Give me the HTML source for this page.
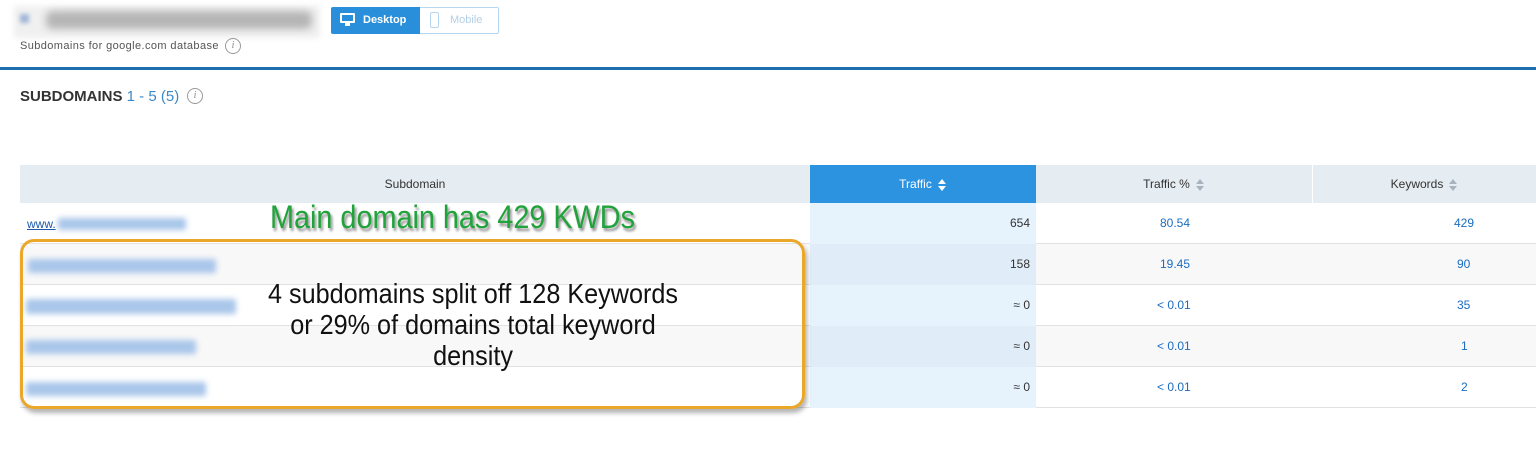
<!DOCTYPE html>
<html><head><meta charset="utf-8"><style>
*{margin:0;padding:0;box-sizing:border-box}
body{width:1536px;height:476px;background:#fff;font-family:"Liberation Sans",sans-serif;position:relative;overflow:hidden}
.a{position:absolute}
.blur{position:absolute;background:#a9c6ea;filter:blur(3px);border-radius:2px}
.row{position:absolute;left:20px;width:1516px;height:41px;border-bottom:1px solid #e2e2e2}
.num{position:absolute;font-size:12px;line-height:41px}
.hd{position:absolute;top:165px;height:38px;line-height:38px;font-size:12px;color:#333;text-align:center;background:#e5ecf2}
.arr{display:inline-block;vertical-align:middle;margin-left:6px;width:9px;height:12px;position:relative}
.arr:before{content:"";position:absolute;left:0;top:0;border:4.5px solid transparent;border-bottom:5px solid #a9b3bd;border-top:0}
.arr:after{content:"";position:absolute;left:0;bottom:0;border:4.5px solid transparent;border-top:5px solid #a9b3bd;border-bottom:0}
.w .arr:before{border-bottom-color:#fff}
.w .arr:after{border-top-color:#fff}
</style></head><body>
<div class="a" style="left:14px;top:6px;width:306px;height:32px;background:#f0f0f0;filter:blur(3px)"></div>
<div class="a" style="left:46px;top:11px;width:266px;height:18px;background:#b5b5b5;filter:blur(4px);border-radius:6px"></div>
<div class="a" style="left:20px;top:14px;width:9px;height:9px;background:#9fb6d8;filter:blur(2px)"></div>
<div class="a" style="left:20px;top:40px;font-size:11px;color:#555;letter-spacing:.4px">Subdomains for google.com database</div>
<div class="a" style="left:225px;top:38px;width:16px;height:16px;border:1px solid #999;border-radius:50%;font-size:10px;color:#888;text-align:center;line-height:14px;font-style:italic;font-family:'Liberation Serif',serif">i</div>
<div class="a" style="left:331px;top:7px;width:89px;height:27px;background:#2a8fdb;border-radius:2px 0 0 2px;color:#fff;font-size:11px;font-weight:bold;line-height:27px;padding-left:32px">Desktop</div>
<div class="a" style="left:340px;top:13px;width:15px;height:10px;border:2px solid #fff;border-radius:1px"></div>
<div class="a" style="left:345px;top:23px;width:5px;height:3px;background:#fff"></div>
<div class="a" style="left:420px;top:7px;width:79px;height:27px;border:1px solid #b7d6ef;border-left:0;border-radius:0 2px 2px 0;color:#b2cfe6;font-size:11px;line-height:25px;padding-left:30px">Mobile</div>
<div class="a" style="left:430px;top:12px;width:9px;height:16px;border:1.5px solid #b7d6ef;border-radius:2px"></div>
<div class="a" style="left:0;top:67px;width:1536px;height:3px;background:#1e6fae"></div>
<div class="a" style="left:20px;top:88px;font-size:15px;font-weight:bold;color:#333">SUBDOMAINS <span style="font-weight:normal;color:#3b89c9">1 - 5 (5)</span></div>
<div class="a" style="left:187px;top:88px;width:16px;height:16px;border:1px solid #999;border-radius:50%;font-size:10px;color:#888;text-align:center;line-height:14px;font-style:italic;font-family:'Liberation Serif',serif">i</div>

<div class="hd" style="left:20px;width:790px">Subdomain</div>
<div class="hd w" style="left:810px;width:226px;background:#2c93e0;color:#fff">Traffic<span class="arr"></span></div>
<div class="hd" style="left:1036px;width:277px;border-right:1px solid #fff">Traffic %<span class="arr"></span></div>
<div class="hd" style="left:1313px;width:223px">Keywords<span class="arr"></span></div>

<div class="row" style="top:203px;background:#fff"></div>
<div class="row" style="top:244px;background:#f8f8f8"></div>
<div class="row" style="top:285px;background:#fff"></div>
<div class="row" style="top:326px;background:#f8f8f8"></div>
<div class="row" style="top:367px;background:#fff"></div>
<div class="a" style="left:810px;top:203px;width:226px;height:41px;background:#e6f3fd"></div>
<div class="a" style="left:810px;top:244px;width:226px;height:41px;background:#e0edf8"></div>
<div class="a" style="left:810px;top:285px;width:226px;height:41px;background:#e6f3fd"></div>
<div class="a" style="left:810px;top:326px;width:226px;height:41px;background:#e0edf8"></div>
<div class="a" style="left:810px;top:367px;width:226px;height:41px;background:#e6f3fd"></div>

<div class="a" style="left:27px;top:217px;font-size:12px;color:#1a5aa8;text-decoration:underline">www.</div>
<div class="blur" style="left:58px;top:218px;width:128px;height:12px"></div>
<div class="blur" style="left:28px;top:259px;width:188px;height:14px"></div>
<div class="blur" style="left:26px;top:299px;width:210px;height:15px"></div>
<div class="blur" style="left:26px;top:340px;width:170px;height:14px"></div>
<div class="blur" style="left:26px;top:382px;width:180px;height:14px"></div>

<div class="num" style="top:203px;right:506px;color:#333">654</div>
<div class="num" style="top:244px;right:506px;color:#333">158</div>
<div class="num" style="top:285px;right:506px;color:#333">≈ 0</div>
<div class="num" style="top:326px;right:506px;color:#333">≈ 0</div>
<div class="num" style="top:367px;right:506px;color:#333">≈ 0</div>
<div class="num" style="top:203px;left:1160px;color:#1a6cc0">80.54</div>
<div class="num" style="top:244px;left:1160px;color:#1a6cc0">19.45</div>
<div class="num" style="top:285px;left:1157px;color:#1a6cc0">&lt; 0.01</div>
<div class="num" style="top:326px;left:1157px;color:#1a6cc0">&lt; 0.01</div>
<div class="num" style="top:367px;left:1157px;color:#1a6cc0">&lt; 0.01</div>
<div class="num" style="top:203px;left:1454px;color:#1a6cc0">429</div>
<div class="num" style="top:244px;left:1457px;color:#1a6cc0">90</div>
<div class="num" style="top:285px;left:1457px;color:#1a6cc0">35</div>
<div class="num" style="top:326px;left:1461px;color:#1a6cc0">1</div>
<div class="num" style="top:367px;left:1461px;color:#1a6cc0">2</div>

<div class="a" style="left:270px;top:199px;font-size:32px;color:#1fa33a;text-shadow:2px 3px 3px rgba(0,0,0,.45);transform:scaleX(.9);transform-origin:left;white-space:nowrap">Main domain has 429 KWDs</div>
<div class="a" style="left:20px;top:239px;width:785px;height:170px;border:3px solid #eaa72a;border-radius:14px;box-shadow:2px 4px 5px rgba(0,0,0,.3)"></div>
<div class="a" style="left:173px;top:278px;width:600px;text-align:center;font-size:28px;line-height:31px;color:#111;transform:scaleX(.9)">4 subdomains split off 128 Keywords<br>or 29% of domains total keyword<br>density</div>
</body></html>
